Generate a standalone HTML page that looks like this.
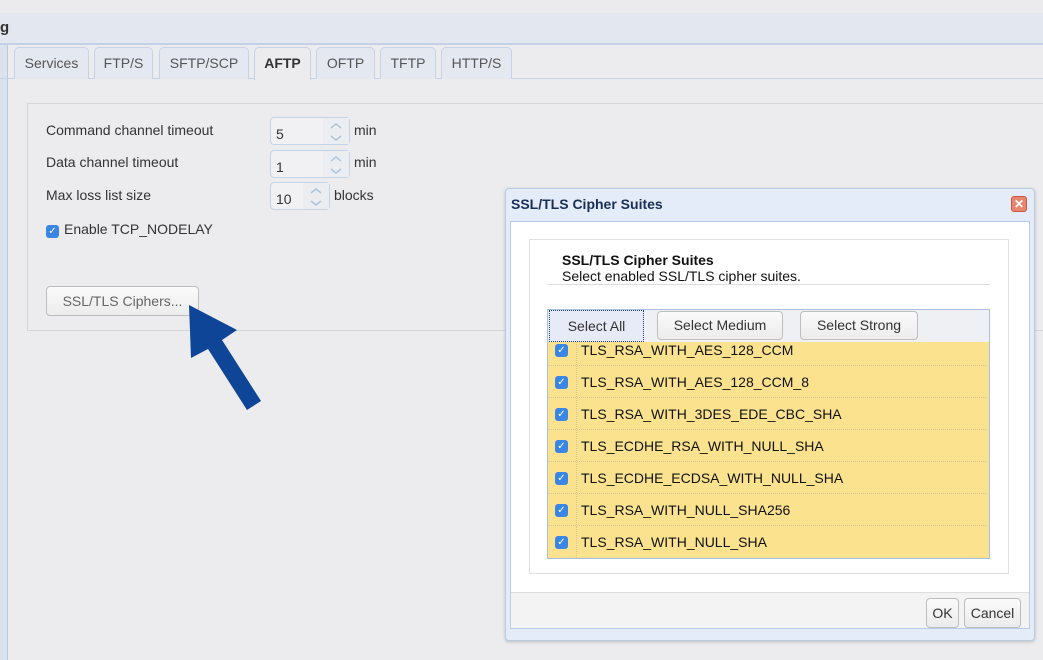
<!DOCTYPE html>
<html><head><style>
*{box-sizing:border-box;margin:0;padding:0}
body{width:1043px;height:660px;overflow:hidden;background:#ecebee;font-family:"Liberation Sans",sans-serif;font-size:14px;color:#333;position:relative}
.a{position:absolute}
.tab{position:absolute;top:47px;height:32px;border:1px solid #c6d2e6;border-bottom:none;border-radius:5px 5px 0 0;background:#e3e8f1;color:#555;font-size:14px;text-align:center;line-height:31px}
.spin{position:absolute;height:28px;border:1px solid #c5d3e6;border-radius:4px;background:#f1f1f3;font-size:14px;color:#333;padding:8px 0 0 5px}
.spin i{position:absolute;right:0;top:0;bottom:0;width:26px;background:#ecedf0}
.spin svg{position:absolute;left:7px;top:4px}
.cb{position:absolute;width:13px;height:13px;background:#3a86e3;border-radius:3px;color:#fff;font-size:10px;line-height:13px;text-align:center}
.btn{position:absolute;border:1px solid #bdbdbd;border-radius:4px;background:linear-gradient(#fafafa,#ececec);text-align:center;color:#333}
.row{position:absolute;left:548px;width:438px;height:32px;background:#fbe28f;border-bottom:1px dotted #d8c78a}
.row .cb{left:7px;top:10px}
.row span{position:absolute;left:33px;top:8px;font-size:14px;color:#111}
.row:before{content:"";position:absolute;left:28px;top:0;bottom:0;border-left:1px dotted #d8c78a}
</style></head><body>
<div class="a" style="left:0;top:0;width:1043px;height:13px;background:#ebeaed"></div>
<div class="a" style="left:0;top:13px;width:1043px;height:32px;background:#e3e7ef;border-bottom:2px solid #c3d0e6"></div>
<div class="a" style="left:0;top:19px;font-weight:bold;font-size:15px;color:#333">g</div>
<div class="a" style="left:0;top:45px;width:8px;height:615px;background:#dde3ee;border-right:1px solid #b9c9e2"></div>
<div class="a" style="left:0;top:78px;width:1043px;height:1px;background:#c6d2e6"></div>
<div class="tab" style="left:14px;width:75px">Services</div>
<div class="tab" style="left:94px;width:59px">FTP/S</div>
<div class="tab" style="left:159px;width:90px">SFTP/SCP</div>
<div class="tab" style="left:254px;width:57px;background:#ecebee;height:33px;font-weight:bold;color:#333">AFTP</div>
<div class="tab" style="left:316px;width:59px">OFTP</div>
<div class="tab" style="left:380px;width:56px">TFTP</div>
<div class="tab" style="left:441px;width:71px">HTTP/S</div>
<div class="a" style="left:27px;top:103px;width:1030px;height:228px;border:1px solid #d6d6d8"></div>
<div class="a" style="left:46px;top:122px">Command channel timeout</div>
<div class="a" style="left:46px;top:154px">Data channel timeout</div>
<div class="a" style="left:46px;top:187px">Max loss list size</div>
<div class="spin" style="left:270px;top:117px;width:80px">5<i><svg width="12" height="20"><path d="M1 6l5-4 5 4M1 14l5 4 5-4" fill="none" stroke="#a9c6e2" stroke-width="1.5"/></svg></i></div>
<div class="spin" style="left:270px;top:150px;width:80px">1<i><svg width="12" height="20"><path d="M1 6l5-4 5 4M1 14l5 4 5-4" fill="none" stroke="#a9c6e2" stroke-width="1.5"/></svg></i></div>
<div class="spin" style="left:270px;top:182px;width:60px">10<i><svg width="12" height="20"><path d="M1 6l5-4 5 4M1 14l5 4 5-4" fill="none" stroke="#a9c6e2" stroke-width="1.5"/></svg></i></div>
<div class="a" style="left:354px;top:122px">min</div>
<div class="a" style="left:354px;top:154px">min</div>
<div class="a" style="left:334px;top:187px">blocks</div>
<div class="cb" style="left:46px;top:225px">✓</div>
<div class="a" style="left:64px;top:221px">Enable TCP_NODELAY</div>
<div class="btn" style="left:46px;top:286px;width:153px;height:30px;line-height:28px;color:#666">SSL/TLS Ciphers...</div>
<svg class="a" style="left:0;top:0" width="1043" height="660"><polygon points="189,305 237,330 222,340 261,401 247,410 208,349 191,358" fill="#0e4596"/></svg>

<div class="a" style="left:505px;top:188px;width:530px;height:453px;background:#e3ecf8;border:1px solid #b9cce6;border-radius:4px;box-shadow:0 1px 3px rgba(0,0,0,.2)"></div>
<div class="a" style="left:511px;top:196px;font-weight:bold;font-size:14px;color:#1a2f55">SSL/TLS Cipher Suites</div>
<div class="a" style="left:1011px;top:196px;width:16px;height:16px;background:#e7856f;border:1px solid #c9583f;border-radius:3px;color:#fff;font-size:12px;line-height:14px;text-align:center;font-weight:bold">✕</div>
<div class="a" style="left:510px;top:221px;width:520px;height:408px;background:#fff;border:1px solid #b9cce6"></div>
<div class="a" style="left:511px;top:592px;width:518px;height:36px;background:#f3f3f3;border-top:1px solid #ddd"></div>
<div class="btn" style="left:926px;top:598px;width:33px;height:30px;line-height:28px">OK</div>
<div class="btn" style="left:964px;top:598px;width:57px;height:30px;line-height:28px">Cancel</div>
<div class="a" style="left:529px;top:239px;width:480px;height:335px;border:1px solid #e0e0e0"></div>
<div class="a" style="left:562px;top:252px;font-weight:bold;font-size:14px;color:#111">SSL/TLS Cipher Suites</div>
<div class="a" style="left:562px;top:268px;font-size:14px;color:#111">Select enabled SSL/TLS cipher suites.</div>
<div class="a" style="left:547px;top:284px;width:443px;height:1px;background:#ddd"></div>
<div class="a" style="left:547px;top:309px;width:443px;height:250px;border:1px solid #a8bfe0;background:#fbe28f"></div>
<div class="a" style="left:548px;top:310px;width:441px;height:32px;background:#eef0f4"></div>
<div class="btn" style="left:549px;top:310px;width:95px;height:32px;line-height:30px;border:1px dotted #223a8a;background:#e6ebf7;border-radius:0">Select All</div>
<div class="btn" style="left:657px;top:311px;width:126px;height:29px;line-height:27px">Select Medium</div>
<div class="btn" style="left:800px;top:311px;width:118px;height:29px;line-height:27px">Select Strong</div>
<div class="row" style="top:333px;height:33px;clip-path:inset(9px 0 0 0)"><div class="cb" style="top:11px">✓</div><span style="top:9px">TLS_RSA_WITH_AES_128_CCM</span></div>
<div class="row" style="top:366px"><div class="cb">✓</div><span>TLS_RSA_WITH_AES_128_CCM_8</span></div>
<div class="row" style="top:398px"><div class="cb">✓</div><span>TLS_RSA_WITH_3DES_EDE_CBC_SHA</span></div>
<div class="row" style="top:430px"><div class="cb">✓</div><span>TLS_ECDHE_RSA_WITH_NULL_SHA</span></div>
<div class="row" style="top:462px"><div class="cb">✓</div><span>TLS_ECDHE_ECDSA_WITH_NULL_SHA</span></div>
<div class="row" style="top:494px"><div class="cb">✓</div><span>TLS_RSA_WITH_NULL_SHA256</span></div>
<div class="row" style="top:526px;border-bottom:none"><div class="cb">✓</div><span>TLS_RSA_WITH_NULL_SHA</span></div>
</body></html>
